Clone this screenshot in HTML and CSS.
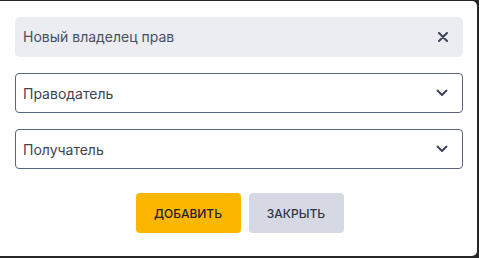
FILE: index.html
```html
<!DOCTYPE html>
<html lang="ru">
<head>
<meta charset="utf-8">
<link rel="stylesheet" href="styles.css">
</head>
<body>
<div class="dialog">
  <div class="header">
    <span class="title">Новый владелец прав</span>
    <svg class="close" width="10" height="10" viewBox="0 0 10 10"><path d="M1 1L9 9M9 1L1 9" stroke="#3d4460" stroke-width="2" stroke-linecap="round"/></svg>
  </div>
  <div class="select">
    <span>Праводатель</span>
    <svg class="chev" width="12" height="8" viewBox="0 0 12 8"><path d="M1.5 1.5L6 6L10.5 1.5" fill="none" stroke="#3d4460" stroke-width="2" stroke-linecap="round" stroke-linejoin="round"/></svg>
  </div>
  <div class="select">
    <span>Получатель</span>
    <svg class="chev" width="12" height="8" viewBox="0 0 12 8"><path d="M1.5 1.5L6 6L10.5 1.5" fill="none" stroke="#3d4460" stroke-width="2" stroke-linecap="round" stroke-linejoin="round"/></svg>
  </div>
  <div class="actions">
    <button class="btn btn-primary">Добавить</button>
    <button class="btn btn-secondary">Закрыть</button>
  </div>
</div>
</body>
</html>
```
FILE: styles.css
```css
html, body {
  margin: 0;
  padding: 0;
  background: #262626;
  width: 479px;
  height: 258px;
  overflow: hidden;
}
.dialog {
  margin-top: 1px;
  width: 477px;
  height: 255px;
  background: #fff;
  border-radius: 0 5px 5px 0;
  box-sizing: border-box;
  padding: 16px 14px 0 15px;
  font-family: Inter, "Noto Sans", sans-serif;
  color: #3a3f50;
  display: flex;
  flex-direction: column;
}
.header {
  height: 40px;
  background: #ecedf2;
  border-radius: 5px;
  display: flex;
  align-items: center;
  justify-content: space-between;
  padding: 0 15px 0 8px;
  font-size: 14px;
  color: #4a4f60;
}
.title {
  margin-top: -2px;
}
.select {
  margin-top: 16px;
  height: 40px;
  box-sizing: border-box;
  border: 1px solid #5a6282;
  border-radius: 4px;
  display: flex;
  align-items: center;
  justify-content: space-between;
  padding: 0 14px 0 7px;
  font-size: 14px;
  color: #3f4452;
}
.actions {
  margin-top: 24px;
  display: flex;
  justify-content: center;
  gap: 8px;
  padding-left: 1px;
}
.btn {
  height: 40px;
  border: none;
  border-radius: 4px;
  font-family: Inter, "Noto Sans", sans-serif;
  font-size: 12px;
  font-weight: 500;
  text-transform: uppercase;
  color: #1e2130;
  padding: 0;
}
.btn-primary {
  width: 105px;
  background: #fbb600;
}
.btn-secondary {
  width: 95px;
  background: #d6d9e3;
  color: #2f3447;
}
```
